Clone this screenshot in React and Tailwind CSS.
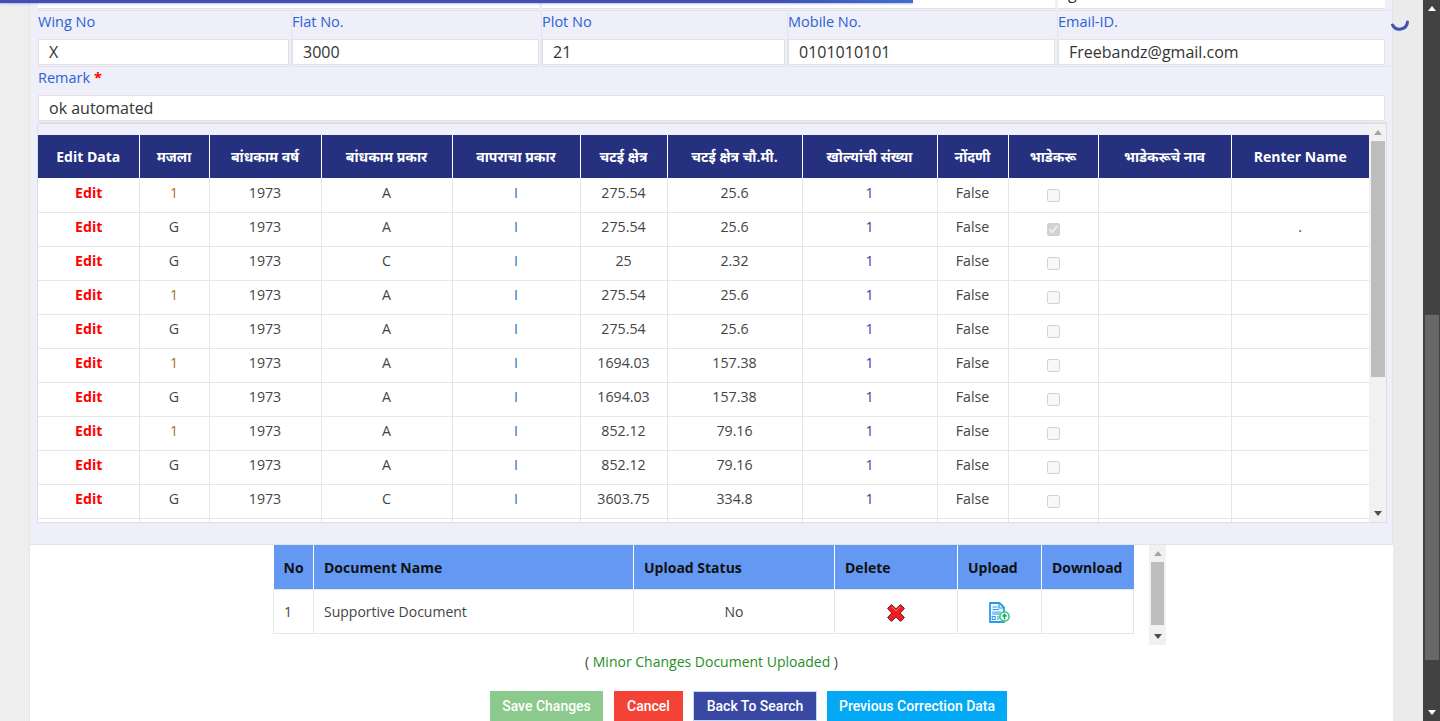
const sans = "font-['Open_Sans','Noto_Sans','Noto_Sans_Devanagari',sans-serif]";

const headers = ["Edit Data", "मजला", "बांधकाम वर्ष", "बांधकाम प्रकार", "वापराचा प्रकार", "चटई क्षेत्र", "चटई क्षेत्र चौ.मी.", "खोल्यांची संख्या", "नोंदणी", "भाडेकरू", "भाडेकरूचे नाव", "Renter Name"];
const widths = ["w-[101px]", "w-[70px]", "w-[112px]", "w-[131px]", "w-[128px]", "w-[87px]", "w-[135px]", "w-[135px]", "w-[71px]", "w-[90px]", "w-[133px]", "w-[138px]"];
const rows = [
  ["1", "A", "275.54", "25.6", false, ""],
  ["G", "A", "275.54", "25.6", true, "."],
  ["G", "C", "25", "2.32", false, ""],
  ["1", "A", "275.54", "25.6", false, ""],
  ["G", "A", "275.54", "25.6", false, ""],
  ["1", "A", "1694.03", "157.38", false, ""],
  ["G", "A", "1694.03", "157.38", false, ""],
  ["1", "A", "852.12", "79.16", false, ""],
  ["G", "A", "852.12", "79.16", false, ""],
  ["G", "C", "3603.75", "334.8", false, ""],
];
const fields = [
  ["Wing No", "X", "w-[254px]"],
  ["Flat No.", "3000", "w-[250px]"],
  ["Plot No", "21", "w-[246px]"],
  ["Mobile No.", "0101010101", "w-[270px]"],
  ["Email-ID.", "Freebandz@gmail.com", "w-[329px]"],
];
const cell = "border-r border-b border-[#e6e6e6] text-center align-top text-[14.2px] leading-[19px]";
const gray = "text-[#444]";
const docTd = "border border-[#e6e6e6]";

function Arrow({ up, className = "" }) {
  return (
    <div className={`flex h-[17px] shrink-0 items-center justify-center ${className}`}>
      <svg width="8" height="5" viewBox="0 0 8 5">
        <path d={up ? "M4 0L8 5H0Z" : "M0 0H8L4 5Z"} fill="currentColor" />
      </svg>
    </div>
  );
}

function Field({ label, value, width }) {
  return (
    <div className={`${width} shrink-0 border-r border-[#e3e4ee] pr-[2px] last:border-r-0`}>
      <div className="h-[28px] pt-[1px] text-[14.5px] leading-[19px] text-[#2b62d6]">{label}</div>
      <div className="h-[26px] border border-[#e2e2e6] bg-white pl-[10px] text-[16px] leading-[24px] text-[#333]">{value}</div>
    </div>
  );
}

function DocHead({ className, children }) {
  return <th className={`border-r border-white bg-[#6398f3] px-[10px] pt-[2px] text-left text-[14px] font-bold text-[#111] ${className}`}>{children}</th>;
}

export default function App() {
  return (
    <div className={`relative flex h-[721px] w-[1440px] overflow-hidden bg-[#ebebeb] ${sans}`}>
      <div className="w-[30px] shrink-0 border-r border-[#e6e6e6] bg-[#eeeeee]" />
      <main className="flex h-full w-[1363px] shrink-0 flex-col overflow-hidden bg-white">
        <section className="flex h-[545px] shrink-0 flex-col overflow-hidden border-r border-b border-[#e3e3ea] bg-[#eeeff8] pl-[8px]">
          <div className="flex h-[9px] w-[1347px] shrink-0 justify-between">
            <div className="h-[9px] w-[501px] border-b border-[#e2e2e6] bg-white" />
            <div className="h-[9px] w-[513px] border-b border-[#e2e2e6] bg-white" />
            <div className="h-[9px] w-[327px] overflow-hidden border-b border-[#e2e2e6] bg-white pl-[10px] text-[16px] leading-[24px] text-[#333]">
              <div className="-mt-[19px]">g</div>
            </div>
          </div>
          <div className="mt-[1px] flex h-[57px] shrink-0 border-y border-[#e3e4ee]">
            {fields.map(([l, v, w]) => <Field key={l} label={l} value={v} width={w} />)}
          </div>
          <div className="h-[55px] shrink-0">
            <div className="h-[28px] pt-[1px] text-[14.5px] leading-[19px] text-[#2b62d6]">Remark <span className="font-bold text-[#f00]">*</span></div>
            <div className="h-[26px] w-[1347px] border border-[#e2e2e6] bg-white pl-[10px] text-[16px] leading-[24px] text-[#333]">ok automated</div>
          </div>
          <div className="h-[2px] w-[1349px] shrink-0 bg-[#dfdfe6]" />
          <div className="-ml-[1px] flex h-[399px] w-[1350px] shrink-0 overflow-hidden border-x border-b border-[#dcdce2]">
            <div className="h-full w-[1331px] shrink-0 overflow-hidden pt-[11px]">
              <table className="w-[1331px] table-fixed border-collapse bg-white">
                <thead>
                  <tr className="h-[43px] bg-[#25317f]">
                    {headers.map((h, i) => (
                      <th key={h} className={`${widths[i]} border-r border-white text-center text-[14px] font-bold text-white last:border-r-0`}>{h}</th>
                    ))}
                  </tr>
                </thead>
                <tbody>
                  {rows.map((r, i) => {
                    const td = `${cell} ${i === 0 ? "pt-[5px]" : "pt-[4px]"}`;
                    return (
                      <tr key={i} className="h-[34px]">
                        <td className={`${td} pl-[1px] font-bold text-[#f00]`}>Edit</td>
                        <td className={`${td} ${r[0] === "1" ? "text-[#a8701c]" : gray}`}>{r[0]}</td>
                        <td className={`${td} ${gray}`}>1973</td>
                        <td className={`${td} ${gray}`}>{r[1]}</td>
                        <td className={`${td} text-[#2a6fb8]`}>I</td>
                        <td className={`${td} ${gray}`}>{r[2]}</td>
                        <td className={`${td} ${gray}`}>{r[3]}</td>
                        <td className={`${td} text-[#4b3a9e]`}>1</td>
                        <td className={`${td} ${gray}`}>False</td>
                        <td className={`${td} ${gray}`}>
                          <input type="checkbox" disabled defaultChecked={r[4]} className="mt-[6px] align-top" />
                        </td>
                        <td className={td} />
                        <td className={`${td} ${gray}`}>{r[5]}</td>
                      </tr>
                    );
                  })}
                  <tr className="h-[34px]">
                    {headers.map((h) => <td key={h} className={cell} />)}
                  </tr>
                </tbody>
              </table>
            </div>
            <div className="flex w-[17px] shrink-0 flex-col bg-[#f1f1f1]">
              <Arrow up className="text-[#a5a5a5]" />
              <div className="ml-[2px] mr-[1px] h-[236px] shrink-0 bg-[#bdbdbd]" />
              <div className="flex-1" />
              <Arrow className="text-[#505050]" />
            </div>
          </div>
        </section>
        <div className="flex h-[100px] shrink-0 pl-[243px]">
          <table className="h-[88px] w-[860px] table-fixed border-collapse self-start">
            <thead>
              <tr className="h-[44px]">
                <DocHead className="w-[40px]">No</DocHead>
                <DocHead className="w-[320px]">Document Name</DocHead>
                <DocHead className="w-[201px]">Upload Status</DocHead>
                <DocHead className="w-[123px]">Delete</DocHead>
                <DocHead className="w-[84px]">Upload</DocHead>
                <DocHead className="w-[92px] border-r-0">Download</DocHead>
              </tr>
            </thead>
            <tbody>
              <tr className="h-[44px] text-[14px] text-[#444]">
                <td className={`${docTd} px-[10px]`}>1</td>
                <td className={`${docTd} px-[10px]`}>Supportive Document</td>
                <td className={`${docTd} text-center`}>No</td>
                <td className={`${docTd} text-center`}>
                  <svg className="mx-auto mt-[3px]" width="20" height="20" viewBox="0 0 20 20">
                    <path d="M5.5 1.5L10 5.8L14.5 1.5L18.5 5.5L14.2 10L18.5 14.5L14.5 18.5L10 14.2L5.5 18.5L1.5 14.5L5.8 10L1.5 5.5Z" fill="#ee1c25" stroke="#6f2020" strokeWidth="1" strokeLinejoin="round" />
                    <path d="M5.5 3.5L10 8L14.5 3.5" fill="none" stroke="#ff6a6a" strokeWidth="1" />
                  </svg>
                </td>
                <td className={`${docTd} text-center`}>
                  <svg className="mx-auto mt-[3px]" width="21" height="21" viewBox="0 0 21 21">
                    <path d="M1 1H10.5L15 5.5V20H1Z" fill="#f2f9fe" stroke="#2a9be8" strokeWidth="1.8" strokeLinejoin="round" />
                    <path d="M10 1.5V6H14.5" fill="none" stroke="#2a9be8" strokeWidth="1.2" />
                    <path d="M3.5 5H8.5M3.5 7.5H10" stroke="#2a9be8" strokeWidth="1.2" />
                    <rect x="3.2" y="9.3" width="8.5" height="3.6" fill="#86c5f0" />
                    <rect x="3.2" y="14.5" width="3" height="3" fill="none" stroke="#2a9be8" strokeWidth="1" />
                    <path d="M8 15H11M8 17H10" stroke="#2a9be8" strokeWidth="1" />
                    <circle cx="15.5" cy="14.5" r="4.6" fill="#fff" stroke="#37cf7a" strokeWidth="1.6" />
                    <path d="M15.5 17.5V13M13.6 14.6L15.5 12.4L17.4 14.6" fill="none" stroke="#1fae60" strokeWidth="1.6" />
                  </svg>
                </td>
                <td className={docTd} />
              </tr>
            </tbody>
          </table>
          <div className="ml-[15px] flex h-[100px] w-[17px] shrink-0 flex-col bg-[#f1f1f1]">
            <Arrow up className="text-[#a5a5a5]" />
            <div className="mx-[2px] h-[63px] shrink-0 bg-[#bdbdbd]" />
            <div className="flex-1" />
            <Arrow className="text-[#505050]" />
          </div>
        </div>
        <div className="mt-[7px] text-center text-[14px] leading-[19px] text-[#444]">
          ( <span className="text-[#1f8f1f]">Minor Changes Document Uploaded</span> )
        </div>
        <div className="mt-[20px] flex gap-[10px] pl-[460px] font-['Roboto',sans-serif] text-[14px] font-medium text-white">
          <button className="mr-[1px] h-[30px] w-[113px] bg-[#8bc98d]">Save Changes</button>
          <button className="h-[30px] w-[69px] bg-[#f44336]">Cancel</button>
          <button className="h-[30px] w-[124px] border border-[#c7d8f5] bg-[#3949a3]">Back To Search</button>
          <button className="h-[30px] w-[180px] bg-[#03a9f4]">Previous Correction Data</button>
        </div>
      </main>
      <div className="w-[30px] shrink-0 bg-[#ebebeb]" />
      <div className="flex w-[17px] shrink-0 flex-col bg-[#424242] text-white">
        <Arrow up />
        <div className="h-[298px] shrink-0" />
        <div className="ml-[2px] mr-[1px] h-[345px] shrink-0 bg-[#686868]" />
        <div className="flex-1" />
        <Arrow />
      </div>
      <div className="absolute left-0 top-0 h-[3px] w-[913px] bg-[linear-gradient(to_right,#3f51b5_85%,#3f6fd0)] shadow-[0_1px_2px_rgba(63,81,181,0.35)]" />
      <svg className="absolute left-[1390px] top-[15px]" width="20" height="20" viewBox="0 0 20 20">
        <path d="M2.5 10A8 8 0 0 0 17.5 7" fill="none" stroke="#3f51b5" strokeWidth="3" strokeLinecap="round" />
      </svg>
    </div>
  );
}
